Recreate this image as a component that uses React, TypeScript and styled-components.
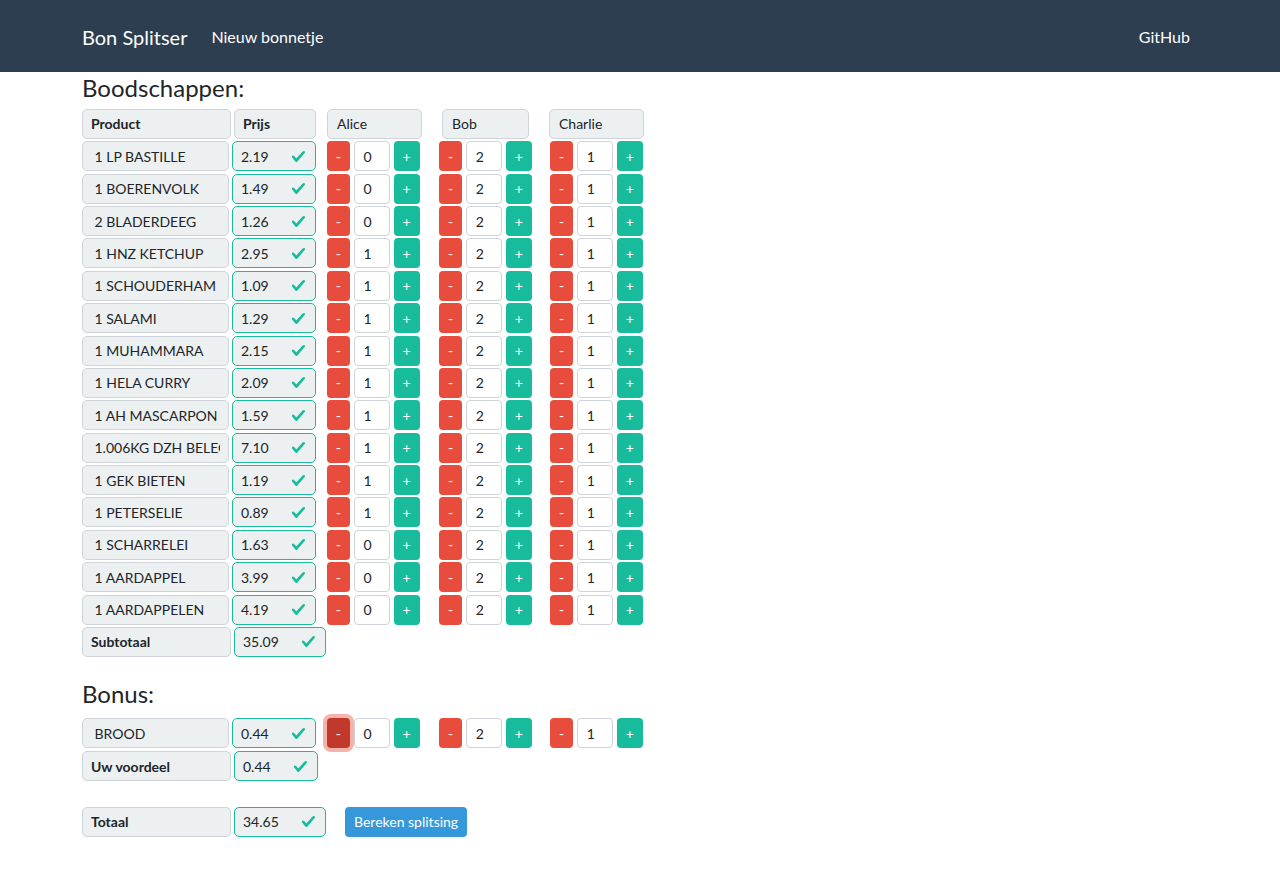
import React from "react";
import styled, { createGlobalStyle, css } from "styled-components";

const GlobalStyle = createGlobalStyle`
  html, body { margin: 0; padding: 0; background: #fff; }
  body {
    font-family: Lato, "Open Sans", "Liberation Sans", sans-serif;
    color: #212529;
    font-size: 14px;
  }
  * { box-sizing: border-box; }
`;

const Container = styled.div`
  width: 1140px;
  margin: 0 auto;
  padding: 0 12px;
`;

const NavBar = styled.nav`
  height: 72px;
  background: #2c3e50;
  color: #fff;
`;

const NavInner = styled(Container)`
  height: 100%;
  display: flex;
  align-items: center;
  padding-top: 1px;
`;

const Brand = styled.span`
  font-size: 20px;
  margin-right: 16px;
  line-height: 1.5;
`;

const NavLink = styled.span<{ $right?: boolean }>`
  font-size: 16px;
  padding: 8px;
  line-height: 1.5;
  ${(p) => p.$right && css`margin-left: auto;`}
`;

const Main = styled(Container)`
  padding-top: 1.5px;
  padding-bottom: 30px;
`;

const Heading = styled.h4<{ $mt: number; $mb: number }>`
  font-size: 24px;
  font-weight: 400;
  line-height: 1.2;
  margin: ${(p) => p.$mt}px 0 ${(p) => p.$mb}px;
`;

const Rows = styled.div<{ $gap: number }>`
  display: flex;
  flex-direction: column;
  gap: ${(p) => p.$gap}px;
`;

const Row = styled.div`
  display: grid;
  grid-template-columns: 227.5px 95px 92px 95px;
  column-gap: 17.5px;
  height: 30px;
`;

const LeftCells = styled.div`
  display: flex;
  gap: 3.5px;
`;

const cellBase = css`
  height: 30px;
  border-radius: 5px;
  display: flex;
  align-items: center;
  font-size: 14px;
  white-space: nowrap;
  flex-shrink: 0;
`;

const LabelCell = styled.div<{ $w: number; $bold?: boolean; $pad?: number }>`
  ${cellBase}
  width: ${(p) => p.$w}px;
  background: #ecf0f1;
  border: 1px solid #ced4da;
  padding: 0 8px 0 ${(p) => p.$pad ?? 8}px;
  font-weight: ${(p) => (p.$bold ? 700 : 400)};
`;

const ClipText = styled.span`
  flex: 1;
  overflow: hidden;
`;

const PriceCell = styled.div<{ $w: number }>`
  ${cellBase}
  width: ${(p) => p.$w}px;
  background: #ecf0f1;
  border: 1px solid #18bc9c;
  padding: 0 9px 0 8px;
  justify-content: space-between;
`;

const PersonCol = styled.div<{ $start?: boolean }>`
  display: flex;
  justify-content: ${(p) => (p.$start ? "flex-start" : "center")};
`;

const PersonHeader = styled.div<{ $w: number }>`
  ${cellBase}
  width: ${(p) => p.$w}px;
  background: #ecf0f1;
  border: 1px solid #ced4da;
  padding-left: 9px;
`;

const Controls = styled.div`
  display: flex;
  gap: 4px;
  height: 30px;
`;

const StepButton = styled.button<{ $kind: "minus" | "plus"; $focus?: boolean }>`
  border: none;
  border-radius: 4px;
  color: #fff;
  font-family: inherit;
  font-size: 14px;
  padding: 0;
  height: 30px;
  width: ${(p) => (p.$kind === "minus" ? 22.5 : 26)}px;
  background: ${(p) => (p.$kind === "minus" ? "#e74c3c" : "#18bc9c")};
  ${(p) =>
    p.$focus &&
    css`
      background: #c0392b;
      box-shadow: 0 0 0 4px rgba(235, 103, 89, 0.5);
    `}
`;

const CountBox = styled.div`
  width: 36px;
  height: 30px;
  border: 1px solid #ced4da;
  border-radius: 4px;
  background: #fff;
  font-size: 14px;
  display: flex;
  align-items: center;
  padding-left: 9px;
`;

const TotalRow = styled.div`
  display: flex;
  align-items: center;
  margin-top: 25.4px;
`;

const CalcButton = styled.button`
  margin-left: 19px;
  height: 30px;
  border: none;
  border-radius: 4px;
  background: #3498db;
  color: #fff;
  font-family: inherit;
  font-size: 14px;
  padding: 0 9px;
`;

const Check = () => (
  <svg width="15" height="15" viewBox="0 0 8 8" aria-hidden="true">
    <path
      fill="#18bc9c"
      d="M2.3 6.73.6 4.53c-.4-1.04.46-1.4 1.1-.8l1.1 1.4 3.4-3.8c.6-.63 1.6-.27 1.2.7l-4 4.6c-.43.5-.8.4-1.1.1z"
    />
  </svg>
);

type Item = [string, string, number, number, number];

const items: Item[] = [
  ["1 LP BASTILLE", "2.19", 0, 2, 1],
  ["1 BOERENVOLK", "1.49", 0, 2, 1],
  ["2 BLADERDEEG", "1.26", 0, 2, 1],
  ["1 HNZ KETCHUP", "2.95", 1, 2, 1],
  ["1 SCHOUDERHAM", "1.09", 1, 2, 1],
  ["1 SALAMI", "1.29", 1, 2, 1],
  ["1 MUHAMMARA", "2.15", 1, 2, 1],
  ["1 HELA CURRY", "2.09", 1, 2, 1],
  ["1 AH MASCARPON", "1.59", 1, 2, 1],
  ["1.006KG DZH BELEG", "7.10", 1, 2, 1],
  ["1 GEK BIETEN", "1.19", 1, 2, 1],
  ["1 PETERSELIE", "0.89", 1, 2, 1],
  ["1 SCHARRELEI", "1.63", 0, 2, 1],
  ["1 AARDAPPEL", "3.99", 0, 2, 1],
  ["1 AARDAPPELEN", "4.19", 0, 2, 1],
];

const people = [
  { name: "Alice", header: 95 },
  { name: "Bob", header: 87 },
  { name: "Charlie", header: 95 },
];

const Stepper = ({ value, focus, start }: { value: number; focus?: boolean; start?: boolean }) => (
  <PersonCol $start={start}>
    <Controls>
      <StepButton $kind="minus" $focus={focus}>-</StepButton>
      <CountBox>{value}</CountBox>
      <StepButton $kind="plus">+</StepButton>
    </Controls>
  </PersonCol>
);

const ItemRow = ({ item, focusFirst }: { item: Item; focusFirst?: boolean }) => (
  <Row>
    <LeftCells>
      <LabelCell $w={146.5} $pad={11.5}>
        <ClipText>{item[0]}</ClipText>
      </LabelCell>
      <PriceCell $w={84}>
        <span>{item[1]}</span>
        <Check />
      </PriceCell>
    </LeftCells>
    <Stepper value={item[2]} focus={focusFirst} start />
    <Stepper value={item[3]} />
    <Stepper value={item[4]} />
  </Row>
);

const SummaryRow = ({ label, value, w }: { label: string; value: string; w: number }) => (
  <LeftCells>
    <LabelCell $w={148.5} $bold>{label}</LabelCell>
    <PriceCell $w={w}>
      <span>{value}</span>
      <Check />
    </PriceCell>
  </LeftCells>
);

export default function App() {
  return (
    <>
      <GlobalStyle />
      <NavBar>
        <NavInner>
          <Brand>Bon Splitser</Brand>
          <NavLink>Nieuw bonnetje</NavLink>
          <NavLink $right>GitHub</NavLink>
        </NavInner>
      </NavBar>
      <Main>
        <Heading $mt={0} $mb={6.7}>Boodschappen:</Heading>
        <Rows $gap={2.38}>
          <Row>
            <LeftCells>
              <LabelCell $w={148.5} $bold>Product</LabelCell>
              <LabelCell $w={82} $bold>Prijs</LabelCell>
            </LeftCells>
            {people.map((p) => (
              <PersonCol key={p.name}>
                <PersonHeader $w={p.header}>{p.name}</PersonHeader>
              </PersonCol>
            ))}
          </Row>
          {items.map((it) => (
            <ItemRow key={it[0]} item={it} />
          ))}
          <SummaryRow label="Subtotaal" value="35.09" w={92} />
        </Rows>

        <Heading $mt={23} $mb={9.3}>Bonus:</Heading>
        <Rows $gap={3.4}>
          <ItemRow item={["BROOD", "0.44", 0, 2, 1]} focusFirst />
          <SummaryRow label="Uw voordeel" value="0.44" w={84} />
        </Rows>

        <TotalRow>
          <SummaryRow label="Totaal" value="34.65" w={92} />
          <CalcButton>Bereken splitsing</CalcButton>
        </TotalRow>
      </Main>
    </>
  );
}
